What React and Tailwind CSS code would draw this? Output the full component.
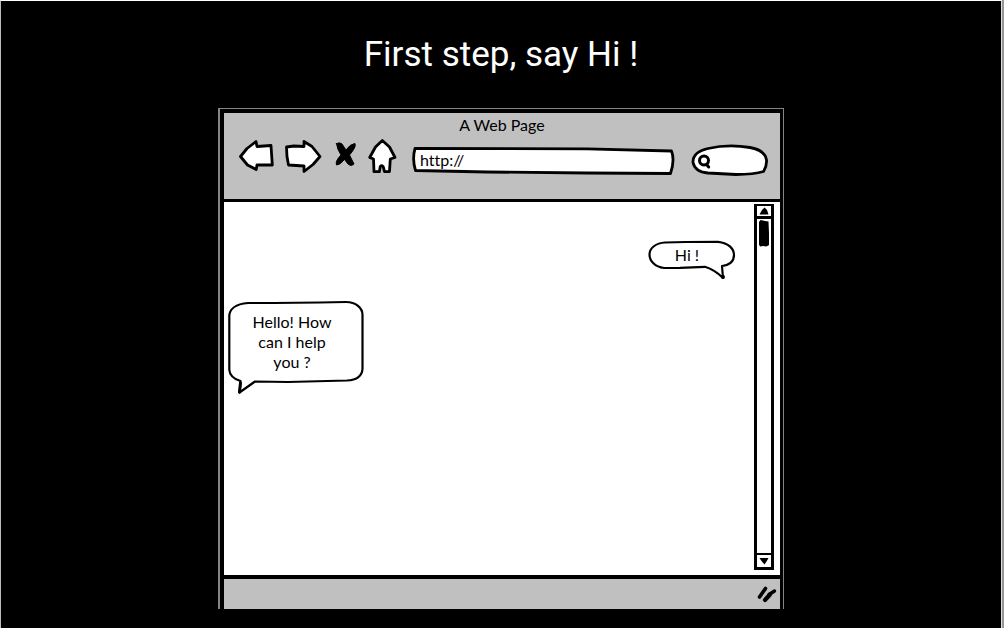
import React from 'react';

const sketch = {
  fill: '#fff',
  stroke: '#000',
  strokeWidth: 3,
  strokeLinejoin: 'round',
  strokeLinecap: 'round',
};

function ToolButton({ label, className, width, children }) {
  return (
    <button type="button" aria-label={label} className={`h-9 shrink-0 ${className}`}>
      <svg className="block overflow-visible" width={width} height="36" viewBox={`0 0 ${width} 36`} {...sketch}>
        {children}
      </svg>
    </button>
  );
}

function Toolbar() {
  return (
    <div className="flex items-start gap-4 pl-3.5 pr-3">
      <nav className="flex gap-2.5 pt-1" aria-label="Browser controls">
        <ToolButton label="Back" className="w-9" width={36}>
          <path strokeWidth="2.8" d="M2.500 17.500 9 9.500 18 2.500 19 7.500 33 6.500 34.300 26 19 26l-.8 4.500L9.500 26z" />
        </ToolButton>
        <ToolButton label="Forward" className="w-[38px]" width={38}>
          <path strokeWidth="2.8" d="M2.500 8 10 7 20 7.500V2.500L28 7.500 36 17.500 29 25.500 20 32.500V27L4.500 26Q2.500 18 2.500 8z" />
        </ToolButton>
        <ToolButton label="Stop" className="w-[26px]" width={26}>
          <path fill="#000" strokeWidth="1" d="M4.500 4.500Q8 3 10 5L14 11Q18 5 23 4.500 24.500 8 17.500 16L22 25Q19 28 16 25L12.500 20.500Q8 26 4.500 26 3 22 9 16 5 10 4.500 4.500z" />
        </ToolButton>
        <ToolButton label="Home" className="w-7" width={28}>
          <path strokeWidth="2.800" d="M14.300 1.500 7.500 8 1.700 18.500 5.500 20 6 32.700h5.400l.8-5q1.700-2 3 0l1.300 5 5-.2.8-12.500 4.700-1.500L21.500 8z" />
        </ToolButton>
      </nav>

      <div className="relative mt-3 h-7 flex-1">
        <svg className="absolute inset-0 h-full w-full overflow-visible" viewBox="0 0 262 28" preserveAspectRatio="none" aria-hidden="true" {...sketch}>
          <path strokeWidth="2.800" vectorEffect="non-scaling-stroke" d="M3 1.500 175 1.800 259.500 4Q263 13 258.500 26.500L175 26 75 25 3.500 23.500Q0 12 3 1.500z" />
        </svg>
        <input
          type="text"
          aria-label="Address"
          defaultValue="http://"
          className="relative block h-[25px] w-full bg-transparent pl-2 pr-3 text-base leading-6 text-black outline-none"
        />
      </div>

      <div className="relative mt-[9px] h-8 w-[78px] shrink-0">
        <svg className="absolute inset-0 h-full w-full overflow-visible" viewBox="0 0 78 32" aria-hidden="true" {...sketch}>
          <path strokeWidth="2.800" d="M18 4.500Q38 0 60 3.500 75 6 76.500 16 77 22 73.500 27.500 64 30.500 46 30.500L18 29Q5 28 3 18.500 2.500 8 18 4.500z" />
          <circle cx="14" cy="16.500" r="4.500" strokeWidth="3" />
          <path strokeWidth="3" d="m16.500 20.500 2.200 2.500" />
        </svg>
        <input type="text" aria-label="Search" className="relative h-full w-full bg-transparent pl-6 pr-3 text-sm text-black outline-none" />
      </div>
    </div>
  );
}

function Scrollbar() {
  return (
    <div className="mr-1.5 mt-0.5 flex h-[366px] w-5 flex-col border-x-[3px] border-t-2 border-b-[3px] border-black bg-white">
      <button type="button" aria-label="Scroll up" className="flex h-[13px] items-center justify-center border-b-[3px] border-black">
        <svg className="block overflow-visible" width="10" height="8" viewBox="0 0 10 8" aria-hidden="true">
          <path d="M5.500.500 3 3 .500 7.500h9L8 3z" />
        </svg>
      </button>
      <div className="flex-1 px-0.5 pt-px">
        <svg className="block overflow-visible" width="10" height="27" viewBox="0 0 10 27" aria-hidden="true">
          <path d="M0 2 1.500 0 6 1l3.500 .5.500 12L10 25 7.500 26.500 4 26l-3 .5L0 24.500 0 14z" />
        </svg>
      </div>
      <button type="button" aria-label="Scroll down" className="flex h-[14px] items-center justify-center border-t-2 border-black">
        <svg className="block overflow-visible" width="10" height="8" viewBox="0 0 10 8" aria-hidden="true">
          <path d="M.500 1h9L7.500 4.500 5.500 7.500 2.500 4z" />
        </svg>
      </button>
    </div>
  );
}

function Conversation() {
  return (
    <div className="flex flex-1 flex-col pl-1 pr-5 pt-[38px] text-center text-base leading-5 text-black">
      <div className="relative h-10 w-[86px] self-end">
        <svg className="absolute inset-0 h-full w-full overflow-visible" viewBox="0 0 86 40" aria-hidden="true" {...sketch}>
          <path strokeWidth="2.200" d="M17 2.500 38 2 70 1.800C81 3 86 9 86 15 86 22 81 25 74 26L75 38Q67 30 57 26.800L32 27.800 16 28C7 27 1.500 21 1.500 14.500 1.500 8 8 3 17 2.500z" />
          <circle cx="75" cy="37" r="2" fill="#000" stroke="none" />
        </svg>
        <p className="relative pr-2 pt-[5px]">Hi !</p>
      </div>
      <div className="relative mt-5 h-[94px] w-[136px]">
        <svg className="absolute inset-0 h-full w-full overflow-visible" viewBox="0 0 136 94" aria-hidden="true" {...sketch}>
          <path strokeWidth="2.200" d="M20 3Q60 3 118 2C128 2 134.500 8 134.500 15L134.500 69C134 76 129 80 119 80.500L60 82 27 81.500 11.500 92.500 12.500 81Q2 78 1.300 70L1.300 17C1 9 8 4 20 3z" />
          <path fill="none" d="m11.500 92 1-9" />
        </svg>
        <p className="relative pl-5 pr-7 pt-3">Hello! How can I help you ?</p>
      </div>
    </div>
  );
}

function BrowserWindow() {
  return (
    <section className="w-[566px] max-w-full border-l-2 border-r border-t border-[#858585] bg-black">
      <div className="border-l-4 border-r-[3px] border-t-4 border-black bg-[#c0c0c0] font-['Lato',sans-serif] [font-variant-ligatures:none]">
        <header className="pb-[23px] pt-0.5">
          <h2 className="text-center text-base leading-5 text-black">A Web Page</h2>
          <Toolbar />
        </header>
        <div className="flex border-b-4 border-t-[3px] border-black bg-white pb-[5px]">
          <Conversation />
          <Scrollbar />
        </div>
        <footer className="flex h-[30px] items-center justify-end pr-[3px]">
          <svg className="block" width="20" height="18" viewBox="0 0 20 18" fill="none" stroke="#000" strokeLinecap="round" aria-hidden="true">
            <path strokeWidth="3.600" d="M8.500 3.500 2.500 12" />
            <path strokeWidth="3.400" d="M17.500 6 12 9.500" />
            <path strokeWidth="4.200" d="M13 9.500 8 15" />
          </svg>
        </footer>
      </div>
    </section>
  );
}

export default function App() {
  return (
    <div className="min-h-screen border-r-2 border-[#969696] bg-black">
      <main className="flex min-h-screen flex-col items-center border-l border-r border-t border-b-0 border-l-[#bcbcbc] border-r-[#dedede] border-t-white bg-black">
        <h1 className="pt-8 text-center font-['Roboto',sans-serif] text-[35px] leading-[44px] text-white">First step, say Hi !</h1>
        <div className="flex w-full justify-center pt-[31px]">
          <BrowserWindow />
        </div>
      </main>
    </div>
  );
}
